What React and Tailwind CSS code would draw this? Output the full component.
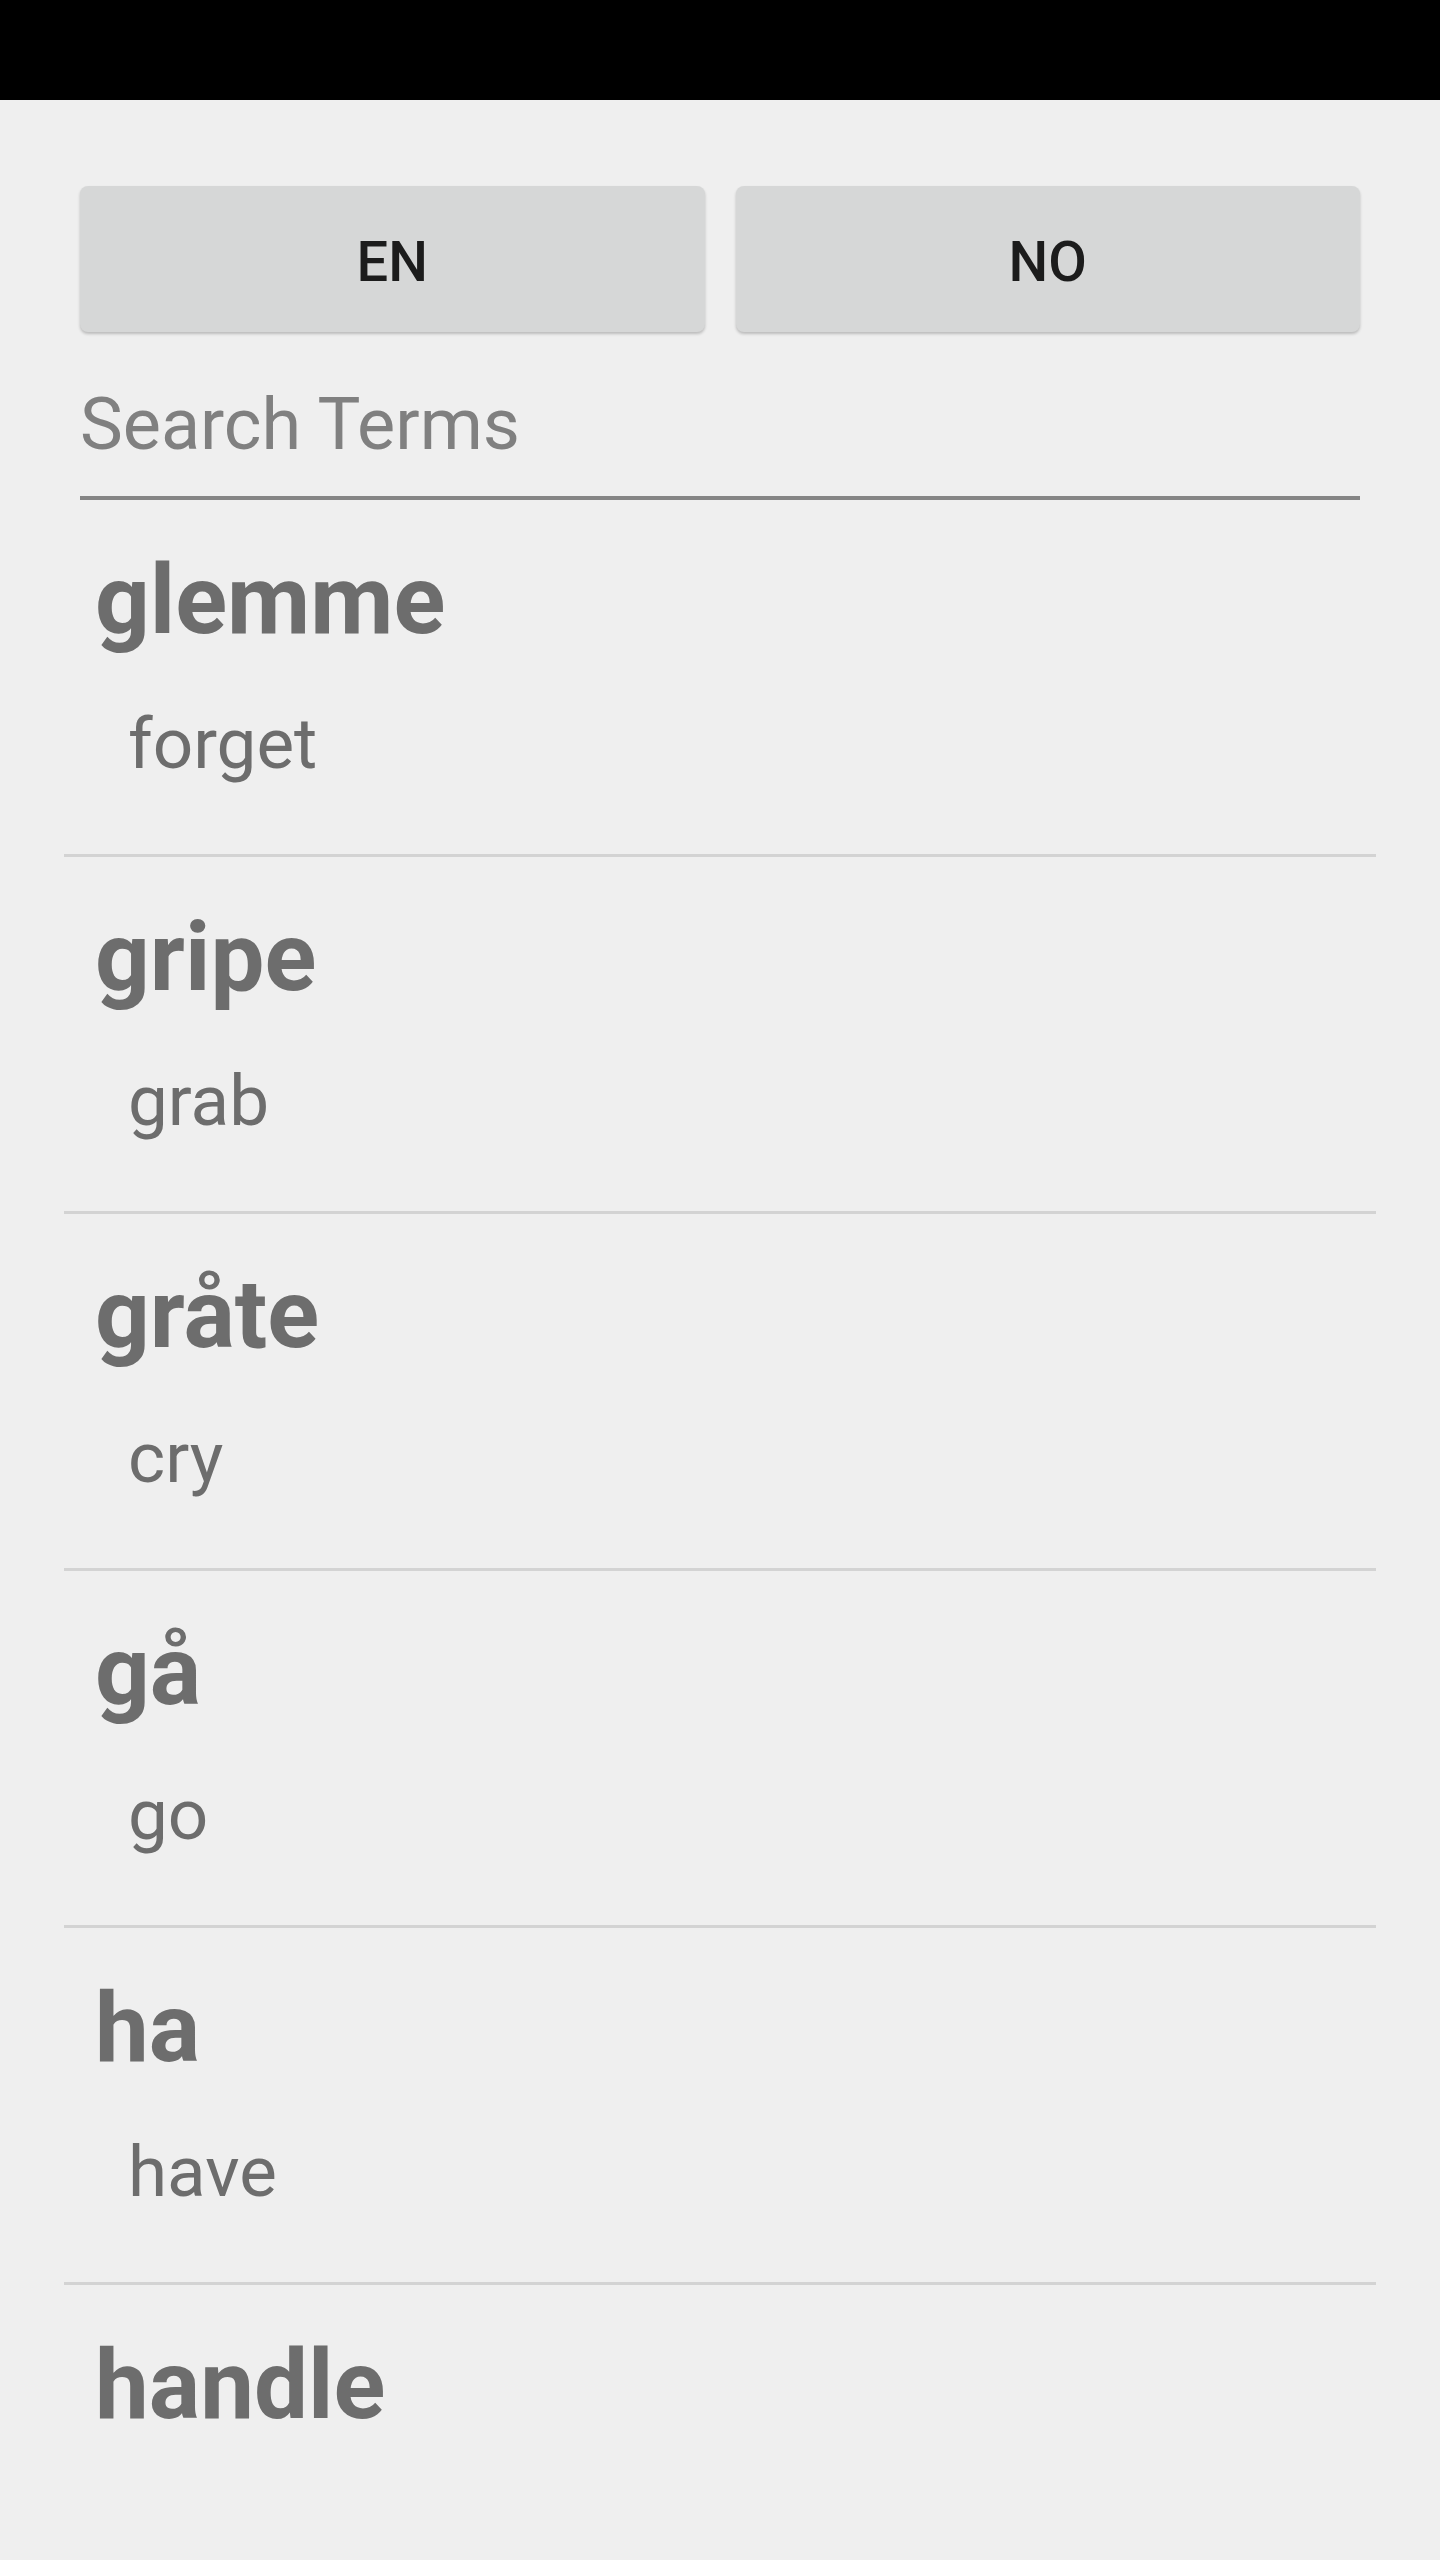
import React, { useState } from 'react';

const terms = [
  { word: 'glemme', meaning: 'forget' },
  { word: 'gripe', meaning: 'grab' },
  { word: 'gråte', meaning: 'cry' },
  { word: 'gå', meaning: 'go' },
  { word: 'ha', meaning: 'have' },
  { word: 'handle', meaning: null },
];

const App = () => {
  const [lang, setLang] = useState('NO');
  const [searchTerm, setSearchTerm] = useState('');

  const filtered = terms.filter(t => t.word.toLowerCase().includes(searchTerm.toLowerCase()));

  return (
    <div className="h-[2560px] overflow-hidden bg-[#efefef] font-['Roboto',sans-serif]">
      {/* Status bar */}
      <div className="h-[100px] bg-black" />

      <div className="px-[80px] pt-[86px]">
        <div className="grid grid-cols-2 gap-[31px]">
          {['EN', 'NO'].map(code => (
            <button
              key={code}
              onClick={() => setLang(code)}
              className="h-[146px] rounded-[8px] bg-[#d6d7d7] pt-[6px] text-[56px] font-medium text-[#1c1c1c] shadow-[0_2px_3px_rgba(0,0,0,0.22)]"
            >
              {code}
            </button>
          ))}
        </div>

        <div className="mt-[51px] border-b-[4px] border-[#858585] pb-[29px]">
          <input
            type="text"
            placeholder="Search Terms"
            value={searchTerm}
            onChange={(e) => setSearchTerm(e.target.value)}
            className="block h-[84px] w-full bg-transparent text-[72px] leading-[84px] text-[#6d6d6d] placeholder-[#808080] outline-none"
          />
        </div>
      </div>

      {/* Term list */}
      <div className="px-[64px]">
        {filtered.map(item => (
          <div key={item.word} className="border-b-[3px] border-[#d3d3d3] pt-[44px] pb-[69px] last:border-b-0">
            <div className="pl-[31px] text-[96px] font-bold leading-[112px] text-[#6d6d6d]">{item.word}</div>
            {item.meaning && (
              <div className="mt-[46px] pl-[64px] text-[71px] leading-[83px] text-[#6d6d6d]">{item.meaning}</div>
            )}
          </div>
        ))}
      </div>
    </div>
  );
};

export default App;
